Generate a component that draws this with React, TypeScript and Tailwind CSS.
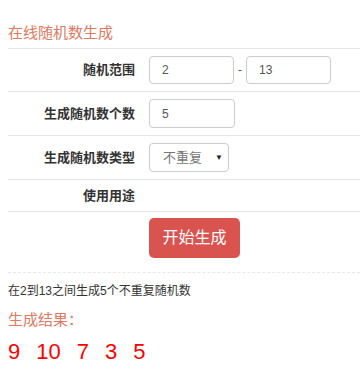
import React from "react";

const font = { fontFamily: '"Liberation Sans", "Noto Sans CJK SC", sans-serif' };

function Row({ label, children, h }: { label: string; children?: React.ReactNode; h: string }) {
  return (
    <div className={`flex items-center border-b border-[#e5e5e5] ${h}`}>
      <div className="w-[127px] shrink-0 text-right text-[13px] font-bold text-[#333]">{label}</div>
      <div className="flex items-center pl-[14px]">{children}</div>
    </div>
  );
}

export default function App() {
  return (
    <div className="w-[360px] h-[371px] bg-white overflow-hidden pl-2" style={font}>
      <div className="h-[49px] border-b border-[#e5e5e5] flex items-end pb-[8px]">
        <span className="text-[15px] text-[#dc7a62] leading-none">在线随机数生成</span>
      </div>
      <Row label="随机范围" h="h-[43px]">
        <div className="w-[85px] h-[28px] border border-[#ccc] rounded-[4px] flex items-center pl-3 text-[12px] text-[#555]">2</div>
        <span className="mx-[4px] text-[12px] text-[#555]">-</span>
        <div className="w-[85px] h-[28px] border border-[#ccc] rounded-[4px] flex items-center pl-3 text-[12px] text-[#555]">13</div>
      </Row>
      <Row label="生成随机数个数" h="h-[44px]">
        <div className="w-[86px] h-[29px] border border-[#ccc] rounded-[4px] flex items-center pl-3 text-[12px] text-[#555]">5</div>
      </Row>
      <Row label="生成随机数类型" h="h-[44px]">
        <div className="w-[80px] h-[29px] border border-[#ccc] rounded-[4px] flex items-center pl-[13px] pr-[5px] justify-between text-[13px] text-[#777]">
          <span>不重复</span>
          <span className="text-[8px] text-[#222]">▼</span>
        </div>
      </Row>
      <Row label="使用用途" h="h-[32px]" />
      <div className="pl-[141px] pt-[6px]">
        <div className="w-[91px] h-[40px] rounded-[5px] bg-[#d9534f] text-white text-[16px] flex items-center justify-center">开始生成</div>
      </div>
      <div className="mt-[14px] border-t border-dashed border-[#e8e8e8]"></div>
      <div className="mt-[12px] text-[12px] text-[#333] leading-none">在2到13之间生成5个不重复随机数</div>
      <div className="mt-[15px] text-[15px] text-[#dc7a62] leading-none">生成结果：</div>
      <div className="mt-[14px] flex gap-[16px] text-[22px] text-[#f00] leading-none">
        <span>9</span>
        <span>10</span>
        <span>7</span>
        <span>3</span>
        <span>5</span>
      </div>
    </div>
  );
}
